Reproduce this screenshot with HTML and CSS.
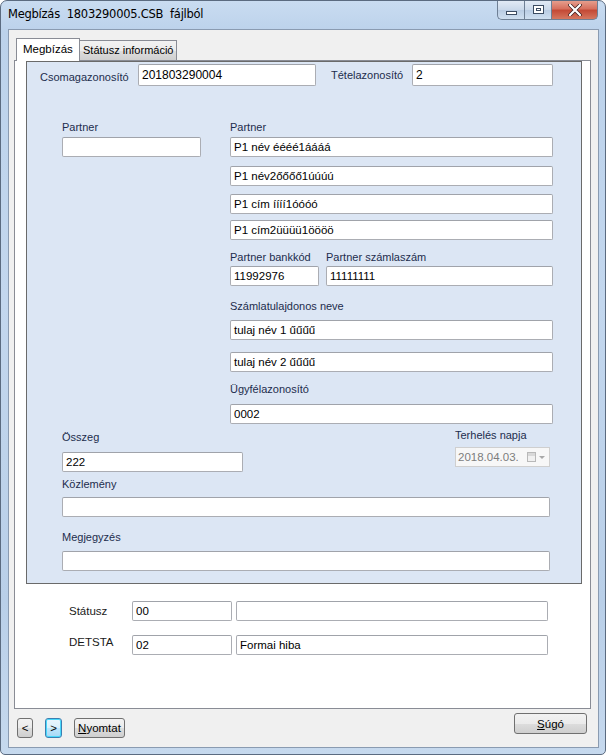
FILE: index.html
```html
<!DOCTYPE html>
<html>
<head>
<meta charset="utf-8">
<link rel="stylesheet" href="styles.css">
</head>
<body>
<div class="window">
  <div class="titlebar">
    <span class="title">Megbízás  1803290005.CSB  fájlból</span>
    <div class="ctrls">
      <div class="cbtn min"><span class="minbar"></span></div>
      <div class="cbtn max"><span class="maxbox"></span></div>
      <div class="cbtn close">
        <svg width="14" height="12" viewBox="0 0 14 12"><path d="M2 1 L12 11 M12 1 L2 11" stroke="#3a1f1f" stroke-width="3.6" stroke-linecap="round"/><path d="M2 1 L12 11 M12 1 L2 11" stroke="#ffffff" stroke-width="2.2" stroke-linecap="round"/></svg>
      </div>
    </div>
  </div>
  <div class="client">
    <div class="tabs">
      <div class="tab sel">Megbízás</div>
      <div class="tab">Státusz információ</div>
    </div>
    <div class="page">
      <div class="panel">
        <div class="row1">
          <span class="lbl l-csomag">Csomagazonosító</span>
          <div class="inp w178 h22">201803290004</div>
          <span class="lbl l-tetel">Tételazonosító</span>
          <div class="inp w141 h22">2</div>
        </div>
        <div class="cols">
          <div class="leftcol">
            <div class="lbl mt34">Partner</div>
            <div class="inp w139 mt3"></div>
          </div>
          <div class="rightcol">
            <div class="lbl mt34">Partner</div>
            <div class="inp full mt3">P1 név éééé1áááá</div>
            <div class="inp full mt9">P1 név2őőőő1úúúú</div>
            <div class="inp full mt8">P1 cím íííí1óóóó</div>
            <div class="inp full mt6">P1 cím2üüüü1öööö</div>
            <div class="bankrow">
              <div class="bank">
                <div class="lbl">Partner bankkód</div>
                <div class="inp w89 mt2">11992976</div>
              </div>
              <div class="acct">
                <div class="lbl">Partner számlaszám</div>
                <div class="inp w227 mt2">11111111</div>
              </div>
            </div>
            <div class="lbl mt13">Számlatulajdonos neve</div>
            <div class="inp full mt7">tulaj név 1 űűűű</div>
            <div class="inp full mt12">tulaj név 2 űűűű</div>
            <div class="lbl mt10">Ügyfélazonosító</div>
            <div class="inp full mt8">0002</div>
          </div>
        </div>
        <div class="sumrow">
          <div class="sum">
            <div class="lbl">Összeg</div>
            <div class="inp w181 mt8">222</div>
          </div>
          <div class="due">
            <div class="lbl">Terhelés napja</div>
            <div class="picker">
              <span class="ptext">2018.04.03.</span>
              <span class="cal"></span>
              <span class="arr"></span>
            </div>
          </div>
        </div>
        <div class="lbl indent mt5">Közlemény</div>
        <div class="inp w488 indent mt6"></div>
        <div class="lbl indent mt13">Megjegyzés</div>
        <div class="inp w488 indent mt7"></div>
      </div>
      <div class="srow r1">
        <span class="slbl s1">Státusz</span>
        <div class="inp w100">00</div>
        <div class="inp w312"></div>
      </div>
      <div class="srow r2">
        <span class="slbl s2">DETSTA</span>
        <div class="inp w100">02</div>
        <div class="inp w312">Formai hiba</div>
      </div>
    </div>
    <div class="btnrow">
      <div class="btn b-prev">&lt;</div>
      <div class="btn b-next">&gt;</div>
      <div class="btn b-print"><u>N</u>yomtat</div>
      <div class="btn b-help"><u>S</u>úgó</div>
    </div>
  </div>
</div>
</body>
</html>
```

FILE: styles.css
```css
* { box-sizing: border-box; }
html, body { margin: 0; padding: 0; background: #ffffff; }
body {
  font-family: "Liberation Sans", Arial, sans-serif;
  font-size: 11px;
  color: #000;
}
.window {
  width: 606px;
  height: 755px;
  border: 1px solid #5b6b80;
  border-radius: 7px 7px 5px 5px;
  background: linear-gradient(180deg, #c9dcf1 0px, #bcd2eb 30px, #c3d7ee 300px, #b9cfe8 600px, #c6d9ee 755px);
  overflow: hidden;
}
.titlebar {
  height: 28px;
  display: flex;
  align-items: flex-start;
  position: relative;
}
.title {
  white-space: pre;
  font-family: "DejaVu Sans", sans-serif;
  font-size: 11.5px;
  margin: 6px 0 0 7px;
  color: #000;
  letter-spacing: -0.25px;
}
.ctrls {
  margin-left: auto;
  margin-right: 7px;
  display: flex;
  height: 20px;
  margin-top: -1px;
}
.cbtn {
  height: 20px;
  border: 1px solid #6e7f94;
  border-top: none;
  display: flex;
  align-items: center;
  justify-content: center;
}
.min {
  width: 27px;
  border-radius: 0 0 0 5px;
  background: linear-gradient(180deg, #e4ecf6 0%, #cbd9ea 50%, #b8cbe2 51%, #cfdff0 100%);
  border-right: none;
}
.max {
  width: 28px;
  background: linear-gradient(180deg, #e4ecf6 0%, #cbd9ea 50%, #b8cbe2 51%, #cfdff0 100%);
}
.close {
  width: 46px;
  border-left: none;
  border-radius: 0 0 5px 0;
  background: linear-gradient(180deg, #e8a493 0%, #d7715f 45%, #c44a36 55%, #d5775f 100%);
}
.minbar {
  display: block;
  width: 11px;
  height: 4px;
  margin-top: 6px;
  background: #fff;
  border: 1px solid #3c4c62;
}
.maxbox {
  display: block;
  width: 11px;
  height: 9px;
  border: 1px solid #3c4c62;
  background: #fff;
  box-shadow: inset 0 0 0 2px #fff, inset 0 0 0 3px #3c4c62;
}
.client {
  margin-left: 7px;
  width: 591px;
  height: 719px;
  background: #f0f0f0;
  border: 1px solid #8a9bb1;
}
.tabs {
  height: 31px;
  margin-bottom: -1px;
  padding-left: 7px;
  display: flex;
  align-items: flex-end;
  position: relative;
  z-index: 2;
}
.tab {
  height: 20px;
  margin-bottom: 1px;
  padding: 0 3px 0 3px;
  line-height: 18px;
  border: 1px solid #898c95;
  border-bottom: none;
  background: linear-gradient(180deg, #f2f2f2 0%, #ebebeb 50%, #dddddd 51%, #cfcfcf 100%);
  font-size: 11px;
  margin-left: -1px;
  white-space: nowrap;
}
.tab.sel {
  height: 23px;
  margin-bottom: 0;
  width: 64px;
  padding-left: 6px;
  background: #ffffff;
  line-height: 20px;
  border-bottom: none;
  margin-left: 0;
  margin-right: 0;
  font-size: 11.5px;
  position: relative;
  z-index: 3;
}
.page {
  margin-left: 5px;
  width: 577px;
  height: 649px;
  border: 1px solid #898c95;
  background: #ffffff;
  position: relative;
  z-index: 1;
}
.panel {
  margin-left: 11px;
  width: 556px;
  height: 523px;
  background: #dce6f4;
  border: 1px solid #6a6a6a;
  color: #1b2b48;
  overflow: hidden;
}
.lbl {
  display: block;
  height: 14px;
  line-height: 14px;
  white-space: nowrap;
  color: #1c2d4d;
}
.inp {
  height: 20px;
  background: #fff;
  border: 1px solid #abadb3;
  border-top-color: #a0a3aa;
  border-radius: 2px;
  padding-left: 3px;
  line-height: 18px;
  color: #000;
  white-space: nowrap;
  overflow: hidden;
  font-size: 11.5px;
}
.h22 { height: 22px; line-height: 20px; font-size: 12px; }
.full { width: 323px; }
.w178 { width: 178px; }
.w141 { width: 141px; }
.w139 { width: 139px; }
.w89 { width: 89px; }
.w227 { width: 227px; }
.w181 { width: 181px; }
.w488 { width: 488px; }
.w100 { width: 100px; }
.w312 { width: 312px; }
.mt2 { margin-top: 2px; }
.mt3 { margin-top: 3px; }
.mt5 { margin-top: 5px; }
.mt6 { margin-top: 6px; }
.mt7 { margin-top: 7px; }
.mt8 { margin-top: 8px; }
.mt9 { margin-top: 9px; }
.mt10 { margin-top: 10px; }
.mt12 { margin-top: 12px; }
.mt13 { margin-top: 13px; }
.mt34 { margin-top: 34px; }
.indent { margin-left: 35px; }
.row1 {
  display: flex;
  align-items: center;
  margin-top: 2px;
  height: 22px;
}
.l-csomag { width: 98px; margin-left: 13px; height: auto; line-height: 14px; padding-top: 4px; }
.l-tetel { width: 81px; margin-left: 15px; height: auto; line-height: 14px; padding-top: 0px; }
.cols {
  display: flex;
  align-items: flex-start;
}
.leftcol {
  margin-left: 35px;
  width: 168px;
}
.rightcol {
  width: 323px;
}
.bankrow {
  display: flex;
  margin-top: 10px;
  gap: 7px;
}
.sumrow {
  display: flex;
  align-items: flex-start;
}
.sum {
  margin-left: 35px;
  padding-top: 6px;
}
.due {
  margin-left: 212px;
  padding-top: 4px;
}
.picker {
  margin-top: 5px;
  width: 95px;
  height: 20px;
  border: 1px solid #cfcfcf;
  background: #f7f7f7;
  display: flex;
  align-items: center;
  padding-left: 2px;
}
.ptext {
  color: #7d7d7d;
  font-size: 11.5px;
}
.cal {
  margin-left: 8px;
  width: 9px;
  height: 10px;
  border: 1px solid #b8b8b8;
  background: linear-gradient(180deg, #d8d8d8 0 3px, #f0f0f0 3px);
}
.arr {
  margin-left: 3px;
  width: 0;
  height: 0;
  border-left: 3px solid transparent;
  border-right: 3px solid transparent;
  border-top: 3px solid #a8a8a8;
}
.srow {
  display: flex;
  align-items: flex-start;
  gap: 4px;
}
.r1 { margin-top: 17px; align-items: center; }
.r2 { margin-top: 14px; }
.slbl {
  display: block;
  line-height: 14px;
  font-size: 11.5px;
  color: #1a1a1a;
  margin-left: 54px;
  width: 59px;
}
.btnrow {
  display: flex;
  align-items: flex-start;
  height: 26px;
  margin-top: 4px;
}
.btn {
  height: 20px;
  border: 1px solid #707070;
  border-radius: 3px;
  background: linear-gradient(180deg, #f2f2f2 0%, #ebebeb 50%, #dddddd 51%, #cfcfcf 100%);
  display: flex;
  align-items: center;
  justify-content: center;
  font-size: 11.5px;
  color: #000;
  margin-top: 5px;
}
.b-prev { margin-left: 8px; width: 16px; }
.b-next {
  margin-left: 12px;
  width: 17px;
  border-color: #3c7fb1;
  box-shadow: inset 0 0 0 1px #48d8fb;
  background: linear-gradient(180deg, #eaf6fd 0%, #d9f0fc 50%, #bee6fd 51%, #a7d9f5 100%);
}
.b-print { margin-left: 12px; width: 51px; }
.b-help { margin-left: auto; margin-right: 11px; width: 73px; height: 21px; margin-top: 0; }
```
